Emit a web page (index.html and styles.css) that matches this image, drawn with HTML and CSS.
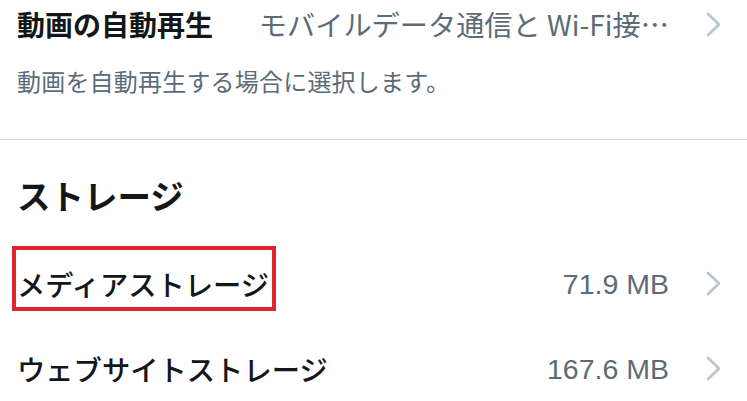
FILE: index.html
```html
<!DOCTYPE html>
<html lang="ja">
<head>
<meta charset="utf-8">
<link rel="stylesheet" href="styles.css">
</head>
<body>
<div class="page">
  <div class="row row-top">
    <span class="label">動画の自動再生</span>
    <span class="value value-long">モバイルデータ通信と Wi-Fi接…</span>
    <svg class="chev" viewBox="0 0 15 25" width="15" height="25"><polyline points="2,2 13,12.5 2,23"/></svg>
  </div>
  <p class="desc">動画を自動再生する場合に選択します。</p>
  <hr class="divider">
  <h2 class="section">ストレージ</h2>
  <div class="row row-item row-first">
    <span class="label label-normal boxed">メディアストレージ</span>
    <span class="value">71.9 MB</span>
    <svg class="chev" viewBox="0 0 15 25" width="15" height="25"><polyline points="2,2 13,12.5 2,23"/></svg>
  </div>
  <div class="row row-item">
    <span class="label label-normal">ウェブサイトストレージ</span>
    <span class="value">167.6 MB</span>
    <svg class="chev" viewBox="0 0 15 25" width="15" height="25"><polyline points="2,2 13,12.5 2,23"/></svg>
  </div>
</div>
</body>
</html>
```
FILE: styles.css
```css
html, body {
  margin: 0;
  padding: 0;
  background: #ffffff;
}
body {
  font-family: "Liberation Sans", "Noto Sans CJK JP", sans-serif;
  color: #14171a;
  width: 747px;
  height: 401px;
  overflow: hidden;
}
.page {
  display: flex;
  flex-direction: column;
}
.row {
  display: flex;
  align-items: center;
  padding: 0 26px 0 17px;
}
.row-top {
  height: 48px;
}
.row-item {
  height: 85px;
}
.row-first {
  margin-top: 24px;
}
.label {
  font-family: "Noto Sans CJK JP", sans-serif;
  font-weight: 700;
  font-size: 28px;
  line-height: 40px;
  white-space: nowrap;
}
.label-normal {
  font-weight: 500;
  font-size: 28.3px;
}
.value {
  margin-left: auto;
  font-size: 28.5px;
  color: #5b6b78;
  white-space: nowrap;
  line-height: 40px;
}
.value-long {
  font-family: "Noto Sans CJK JP", sans-serif;
  font-size: 28.2px;
}
.chev {
  margin-left: 37px;
  flex: none;
}
.chev polyline {
  fill: none;
  stroke: #b9c5cd;
  stroke-width: 2.6;
  stroke-linecap: round;
  stroke-linejoin: round;
}
.desc {
  margin: 17px 0 0;
  padding-left: 17px;
  font-family: "Noto Sans CJK JP", sans-serif;
  font-size: 24px;
  letter-spacing: 0.2px;
  line-height: 32px;
  color: #5b6b78;
}
.divider {
  margin: 42px 0 0;
  border: 0;
  height: 1px;
  background: #d9dcdf;
}
.section {
  margin: 33px 0 0;
  padding-left: 17px;
  font-family: "Noto Sans CJK JP", sans-serif;
  font-weight: 700;
  font-size: 33.5px;
  line-height: 44px;
  color: #14171a;
}
.boxed {
  position: relative;
}
.boxed::after {
  content: "";
  position: absolute;
  left: -5px;
  right: -7px;
  top: -18px;
  bottom: -7px;
  border: 4px solid #e1232b;
}
```
